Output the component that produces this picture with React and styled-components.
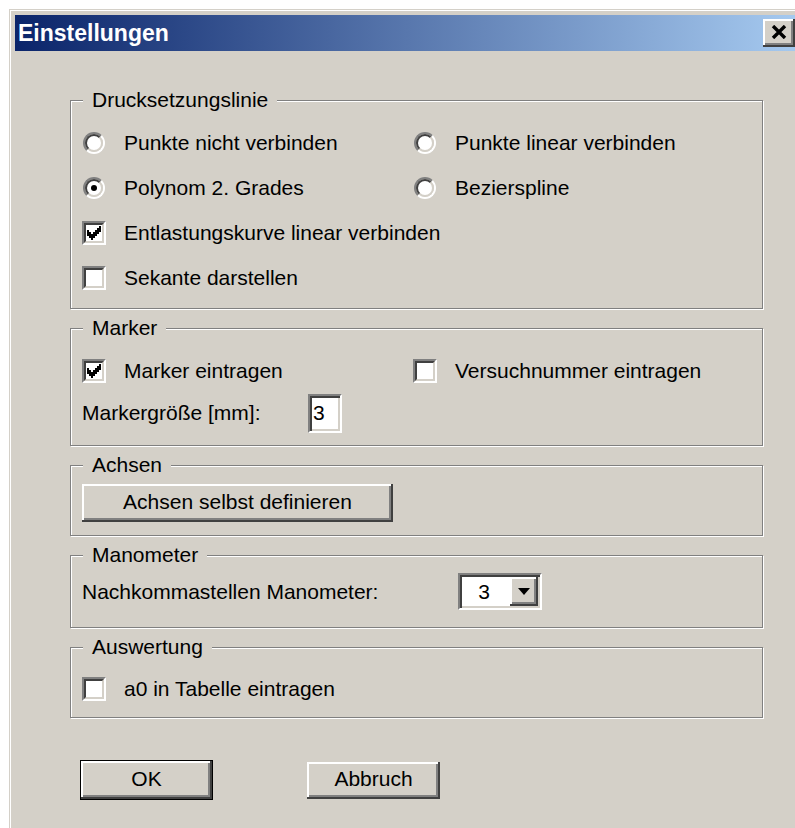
import React from 'react';
import styled, { createGlobalStyle, css } from 'styled-components';

const GlobalStyle = createGlobalStyle`
  html, body {
    margin: 0;
    padding: 0;
    background: #fff;
    overflow: hidden;
  }
  body {
    font-family: "Liberation Sans", Arial, sans-serif;
    font-size: 21px;
    color: #000;
  }
`;

// classic 3D edges
const raised = css`
  box-shadow: inset -2px -2px 0 #404040, inset 2px 2px 0 #fff, inset -4px -4px 0 #808080;
`;

const sunkenOuter = css`
  border: 2px solid;
  border-color: #808080 #fff #fff #808080;
`;

const sunkenInner = css`
  border: 2px solid;
  border-color: #404040 #d4d0c8 #d4d0c8 #404040;
`;

const Window = styled.div`
  margin: 9px 0 0 9px;
  width: 796px;
  height: 830px;
  box-sizing: border-box;
  padding: 6px 6px 0 6px;
  background: #d4d0c8;
  box-shadow: inset 1px 1px 0 #d4d0c8, inset 2px 2px 0 #fff;
`;

const TitleBar = styled.div`
  height: 36px;
  display: flex;
  align-items: center;
  padding-left: 3px;
  background: linear-gradient(to right, #0a246a, #a6caf0);
`;

const Title = styled.div`
  flex: 1;
  color: #fff;
  font-weight: bold;
  font-size: 23px;
  line-height: 36px;
`;

const CloseButton = styled.div`
  width: 32px;
  height: 28px;
  margin-right: 4px;
  display: flex;
  align-items: center;
  justify-content: center;
  padding-bottom: 2px;
  box-sizing: border-box;
  background: #d4d0c8;
  ${raised}
`;

const Content = styled.div`
  padding: 49px 0 0 55px;
`;

const Group = styled.div`
  width: 693px;
  box-sizing: border-box;
  margin-top: ${p => p.$top || 0}px;
  border: 1px solid #808080;
  box-shadow: 1px 1px 0 #fff, inset 1px 1px 0 #fff;
`;

const Caption = styled.div`
  width: fit-content;
  margin: -13px 0 0 12px;
  padding: 0 9px;
  line-height: 24px;
  background: #d4d0c8;
`;

const GroupBody = styled.div`
  padding: ${p => p.$pad};
`;

const TwoCol = styled.div`
  display: grid;
  grid-template-columns: 331px auto;
  grid-auto-rows: 45px;
  align-items: center;
`;

const Option = styled.label`
  display: flex;
  align-items: center;
  gap: 18px;
  height: 45px;
  white-space: nowrap;
`;

const Slot = styled.span`
  width: 24px;
  display: flex;
  justify-content: center;
`;

const RadioRing = styled.span`
  width: 22px;
  height: 22px;
  box-sizing: border-box;
  border-radius: 50%;
  ${sunkenOuter}
`;

const RadioWell = styled.span`
  width: 100%;
  height: 100%;
  box-sizing: border-box;
  border-radius: 50%;
  display: flex;
  align-items: center;
  justify-content: center;
  background: #fff;
  ${sunkenInner}
`;

const Dot = styled.span`
  width: 6px;
  height: 6px;
  border-radius: 50%;
  background: #000;
`;

const CheckFrame = styled.span`
  width: 24px;
  height: 24px;
  box-sizing: border-box;
  ${sunkenOuter}
`;

const CheckWell = styled.span`
  width: 100%;
  height: 100%;
  box-sizing: border-box;
  display: flex;
  align-items: center;
  justify-content: center;
  background: #fff;
  ${sunkenInner}
`;

const FieldRow = styled.div`
  display: flex;
  align-items: center;
  height: ${p => p.$h}px;
`;

const FieldLabel = styled.span`
  width: ${p => p.$w}px;
  white-space: nowrap;
`;

const TextBox = styled.div`
  width: 34px;
  height: 39px;
  box-sizing: border-box;
  display: flex;
  align-items: center;
  padding-left: 3px;
  background: #fff;
  ${sunkenOuter}
  box-shadow: inset 2px 2px 0 #404040, inset -2px -2px 0 #d4d0c8;
`;

const Combo = styled.div`
  width: 84px;
  height: 37px;
  box-sizing: border-box;
  display: flex;
  padding: 2px;
  background: #fff;
  ${sunkenOuter}
  box-shadow: inset 2px 2px 0 #404040, inset -2px -2px 0 #d4d0c8;
`;

const ComboValue = styled.div`
  flex: 1;
  display: flex;
  align-items: center;
  justify-content: center;
  padding-right: 4px;
`;

const ComboArrow = styled.div`
  width: 28px;
  display: flex;
  align-items: center;
  justify-content: center;
  background: #d4d0c8;
  ${raised}
`;

const PushButton = styled.button`
  width: ${p => p.$w}px;
  height: ${p => p.$h}px;
  box-sizing: border-box;
  padding: 0 0 2px;
  border: none;
  background: #d4d0c8;
  font: inherit;
  color: #000;
  ${raised}
  ${p => p.$default && css`
    border: 1px solid #000;
  `}
`;

const Footer = styled.div`
  display: flex;
  align-items: center;
  gap: 94px;
  margin-top: 42px;
  padding-left: 10px;
`;

function Radio({ checked, children }) {
  return (
    <Option>
      <Slot>
        <RadioRing>
          <RadioWell>{checked && <Dot />}</RadioWell>
        </RadioRing>
      </Slot>
      {children}
    </Option>
  );
}

function Check({ checked, children }) {
  return (
    <Option>
      <Slot>
        <CheckFrame>
          <CheckWell>
            {checked && (
              <svg width="14" height="14" viewBox="0 0 7 7" shapeRendering="crispEdges">
                <polygon
                  fill="#000"
                  points="0,2 1,2 1,3 2,3 2,4 3,4 3,3 4,3 4,2 5,2 5,1 6,1 6,0 7,0 7,3 6,3 6,4 5,4 5,5 4,5 4,6 3,6 3,7 2,7 2,6 1,6 1,5 0,5"
                />
              </svg>
            )}
          </CheckWell>
        </CheckFrame>
      </Slot>
      {children}
    </Option>
  );
}

export default function App() {
  return (
    <>
      <GlobalStyle />
      <Window>
        <TitleBar>
          <Title>Einstellungen</Title>
          <CloseButton>
            <svg width="16" height="14" viewBox="0 0 16 14">
              <path d="M2 1 L14 13 M14 1 L2 13" stroke="#000" strokeWidth="3.4" />
            </svg>
          </CloseButton>
        </TitleBar>

        <Content>
          <Group>
            <Caption>Drucksetzungslinie</Caption>
            <GroupBody $pad="8px 0 8px 11px">
              <TwoCol>
                <Radio>Punkte nicht verbinden</Radio>
                <Radio>Punkte linear verbinden</Radio>
                <Radio checked>Polynom 2. Grades</Radio>
                <Radio>Bezierspline</Radio>
              </TwoCol>
              <Check checked>Entlastungskurve linear verbinden</Check>
              <Check>Sekante darstellen</Check>
            </GroupBody>
          </Group>

          <Group $top={19}>
            <Caption>Marker</Caption>
            <GroupBody $pad="8px 0 12px 11px">
              <TwoCol>
                <Check checked>Marker eintragen</Check>
                <Check>Versuchnummer eintragen</Check>
              </TwoCol>
              <FieldRow $h={40}>
                <FieldLabel $w={226}>Markergröße [mm]:</FieldLabel>
                <TextBox>3</TextBox>
              </FieldRow>
            </GroupBody>
          </Group>

          <Group $top={19}>
            <Caption>Achsen</Caption>
            <GroupBody $pad="7px 0 13px 11px">
              <PushButton $w={311} $h={38}>Achsen selbst definieren</PushButton>
            </GroupBody>
          </Group>

          <Group $top={19}>
            <Caption>Manometer</Caption>
            <GroupBody $pad="6px 0 17px 11px">
              <FieldRow $h={37}>
                <FieldLabel $w={376}>Nachkommastellen Manometer:</FieldLabel>
                <Combo>
                  <ComboValue>3</ComboValue>
                  <ComboArrow>
                    <svg width="12" height="7" viewBox="0 0 12 7">
                      <polygon points="0,0 12,0 6,7" fill="#000" />
                    </svg>
                  </ComboArrow>
                </Combo>
              </FieldRow>
            </GroupBody>
          </Group>

          <Group $top={19}>
            <Caption>Auswertung</Caption>
            <GroupBody $pad="7px 0 6px 11px">
              <Check>a0 in Tabelle eintragen</Check>
            </GroupBody>
          </Group>

          <Footer>
            <PushButton $w={133} $h={40} $default>OK</PushButton>
            <PushButton $w={133} $h={37}>Abbruch</PushButton>
          </Footer>
        </Content>
      </Window>
    </>
  );
}
